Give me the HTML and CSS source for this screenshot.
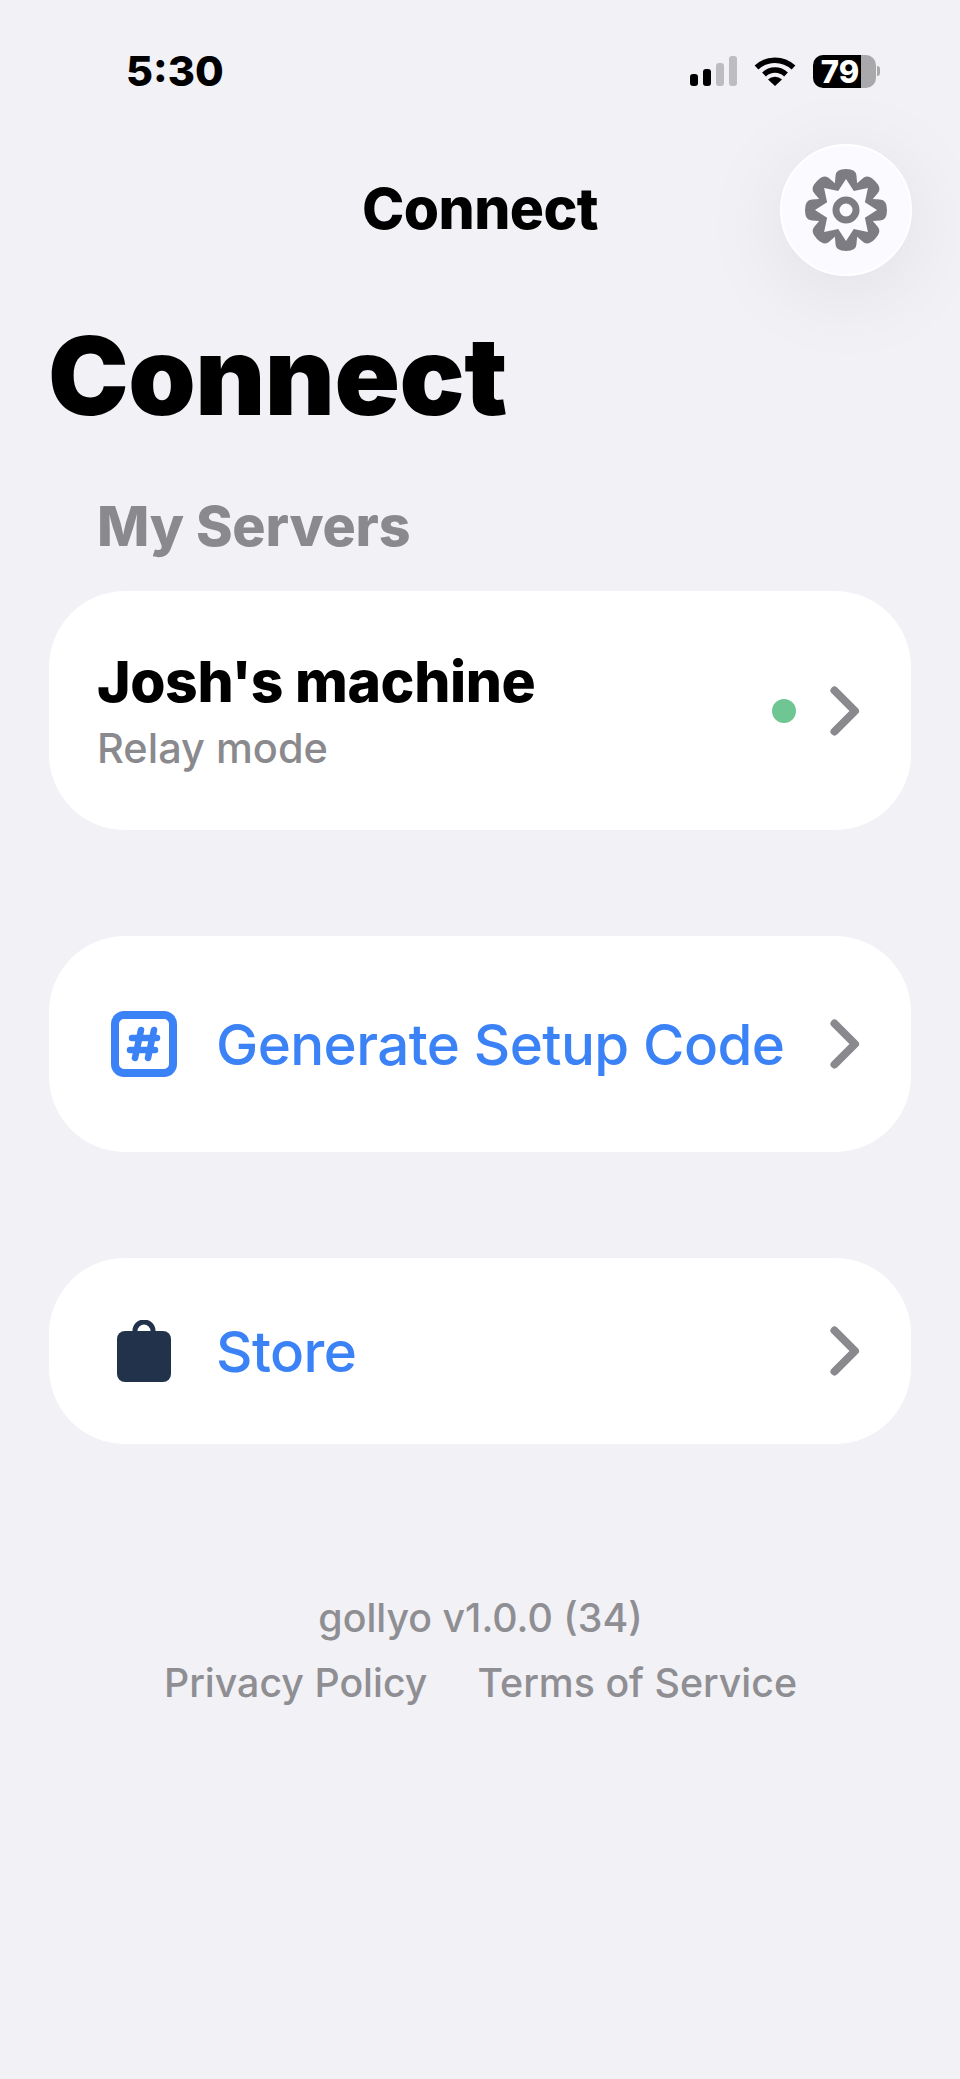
FILE: index.html
```html
<!DOCTYPE html>
<html lang="en">
<head>
  <meta charset="UTF-8">
  <meta name="viewport" content="width=device-width, initial-scale=1.0">
  <title>Connect</title>
  <link rel="stylesheet" href="styles.css">
</head>
<body>
  <!-- Status Bar -->
  <div class="status-bar">
    <span class="status-time">5:30</span>
    <div class="status-icons">
      <div class="signal">
        <span class="signal-bar bar-1"></span>
        <span class="signal-bar bar-2"></span>
        <span class="signal-bar bar-3"></span>
        <span class="signal-bar bar-4"></span>
      </div>
      <svg class="wifi" width="42" height="30" viewBox="0 0 42 30">
        <path d="M2.5 11.5a27 27 0 0 1 37 0" fill="none" stroke="#000" stroke-width="5.5"/>
        <path d="M10 18.5a16 16 0 0 1 22 0" fill="none" stroke="#000" stroke-width="5.5"/>
        <path d="M14 23.5a10 10 0 0 1 14 0L21 30z" fill="#000"/>
      </svg>
      <div class="battery">
        <div class="battery-body"><span class="battery-level">79</span></div>
        <span class="battery-tip"></span>
      </div>
    </div>
  </div>

  <!-- Nav Bar -->
  <div class="nav-bar">
    <h2 class="nav-title">Connect</h2>
    <button class="settings-button">
      <svg width="92" height="92" viewBox="-46 -46 92 92">
        <path class="gear-outline" fill-rule="evenodd" d="M26.8 -11.100L34 -10.500Q41 -10.500 41 0Q41 10.500 34 10.500L26.800 11.100L31.500 16.600Q36.400 21.600 29 29Q21.600 36.400 16.600 31.500L11.100 26.800L10.500 34Q10.500 41 0 41Q-10.500 41 -10.500 34L-11.100 26.800L-16.600 31.500Q-21.600 36.400 -29 29Q-36.400 21.600 -31.500 16.600L-26.800 11.100L-34 10.500Q-41 10.500 -41 0Q-41 -10.500 -34 -10.500L-26.800 -11.100L-31.500 -16.600Q-36.400 -21.600 -29 -29Q-21.600 -36.400 -16.600 -31.500L-11.100 -26.800L-10.500 -34Q-10.500 -41 0 -41Q10.500 -41 10.500 -34L11.100 -26.800L16.600 -31.500Q21.600 -36.400 29 -29Q36.400 -21.600 31.500 -16.600ZM31 0L18.900 7.800L21.900 21.900L7.800 18.900L0 31L-7.800 18.900L-21.900 21.900L-18.900 7.800L-31 0L-18.900 -7.800L-21.900 -21.900L-7.800 -18.900L0 -31L7.800 -18.900L21.900 -21.900L18.900 -7.800Z"/>
        <circle class="gear-hub" r="10"/>
      </svg>
    </button>
  </div>

  <div class="container">
    <h1>Connect</h1>
    <h3 class="section-title">My Servers</h3>

    <!-- Server Card -->
    <div class="card server-card">
      <div class="server-info">
        <div class="server-name">Josh's machine</div>
        <div class="server-mode">Relay mode</div>
      </div>
      <span class="status-dot"></span>
      <svg class="chevron" width="30" height="50" viewBox="0 0 30 50"><path d="M4.500 4.500L25 25L4.500 45.500"/></svg>
    </div>

    <!-- Setup Code Card -->
    <div class="card code-card">
      <svg class="card-icon" width="68" height="68" viewBox="0 0 68 68" fill="none" stroke="#3b82f6">
        <rect x="5" y="5" width="58" height="58" rx="9" stroke-width="8"/>
        <path d="M31 20L25 48M44 20L38 48M22 28H47M20 40H45" stroke-width="6.500" stroke-linecap="round"/>
      </svg>
      <span class="card-label">Generate Setup Code</span>
      <svg class="chevron" width="30" height="50" viewBox="0 0 30 50"><path d="M4.500 4.500L25 25L4.500 45.500"/></svg>
    </div>

    <!-- Store Card -->
    <div class="card store-card">
      <svg class="card-icon" width="68" height="62" viewBox="0 0 68 62">
        <path d="M25 14V11a9 9 0 0 1 18 0v3" fill="none" stroke="#22324b" stroke-width="5"/>
        <rect x="7" y="11" width="54" height="51" rx="8" fill="#22324b"/>
      </svg>
      <span class="card-label">Store</span>
      <svg class="chevron" width="30" height="50" viewBox="0 0 30 50"><path d="M4.500 4.500L25 25L4.500 45.500"/></svg>
    </div>

    <!-- Footer -->
    <div class="footer">
      <div class="version">gollyo v1.0.0 (34)</div>
      <div class="footer-links">
        <span>Privacy Policy</span>
        <span>Terms of Service</span>
      </div>
    </div>
  </div>
</body>
</html>
```

FILE: styles.css
```css
/* General Styles */
body {
  font-family: Inter, "Liberation Sans", sans-serif;
  background-color: #f1f1f6;
  margin: 0;
  color: #000000;
}

/* Status Bar */
.status-bar {
  display: flex;
  justify-content: space-between;
  align-items: center;
  height: 30px;
  padding: 56px 80px 0 126px;
}

.status-time {
  font-size: 41.500px;
  font-weight: 800;
}

.status-icons {
  display: flex;
  align-items: center;
  gap: 17px;
}

.signal {
  display: flex;
  align-items: flex-end;
  gap: 5px;
  height: 30px;
}

.signal-bar {
  width: 8px;
  border-radius: 3px;
  background-color: #000000;
}

.bar-1 { height: 12px; }
.bar-2 { height: 17px; }
.bar-3 { height: 23px; background-color: #bcbcc1; }
.bar-4 { height: 30px; background-color: #bcbcc1; }

.battery {
  display: flex;
  align-items: center;
  gap: 1px;
}

.battery-body {
  width: 63px;
  height: 33px;
  border-radius: 10px;
  background: linear-gradient(to right, #000000 48px, #a9a9ac 48px);
}

.battery-level {
  display: block;
  width: 48px;
  margin-left: 3px;
  font-size: 31px;
  line-height: 33px;
  font-weight: 800;
  text-align: center;
  color: #ffffff;
}

.battery-tip {
  width: 3px;
  height: 10px;
  border-radius: 0 3px 3px 0;
  background-color: #a9a9ac;
}

/* Nav Bar */
.nav-bar {
  display: flex;
  justify-content: flex-end;
  position: relative;
  padding: 58px 48px 0 0;
}

.nav-title {
  position: absolute;
  left: 0;
  right: 0;
  top: 57px;
  margin: 0;
  font-size: 57px;
  line-height: 132px;
  font-weight: 800;
  letter-spacing: -0.6px;
  text-align: center;
}

.settings-button {
  display: flex;
  justify-content: center;
  align-items: center;
  position: relative;
  width: 132px;
  height: 132px;
  padding: 0;
  border: 2px solid #ffffff;
  border-radius: 50%;
  background-color: #fafaff;
  box-shadow: 0 16px 90px rgba(0, 0, 0, 0.08);
}

.gear-outline {
  fill: #7c7c82;
}

.gear-hub {
  fill: none;
  stroke: #7c7c82;
  stroke-width: 7;
}

/* Content */
.container {
  padding: 0 49px;
}

h1 {
  margin: 38px 0 0 -1px;
  font-size: 108px;
  line-height: 124px;
  font-weight: 900;
  letter-spacing: -0.5px;
}

.section-title {
  margin: 56px 0 0 48px;
  font-size: 55.500px;
  line-height: 64px;
  font-weight: 800;
  letter-spacing: -0.2px;
  color: #8a8a8e;
}

/* Cards */
.card {
  display: flex;
  align-items: center;
  padding: 0 51px 0 48px;
  border-radius: 76px;
  background-color: #ffffff;
}

.server-card {
  height: 239px;
  margin-top: 33px;
}

.code-card {
  height: 216px;
  margin-top: 106px;
}

.store-card {
  height: 186px;
  margin-top: 106px;
}

.server-info {
  flex: 1;
}

.server-name {
  font-size: 57px;
  line-height: 68px;
  font-weight: 800;
  letter-spacing: -0.4px;
}

.server-mode {
  margin-top: 7px;
  font-size: 41.500px;
  line-height: 50px;
  font-weight: 500;
  color: #8a8a8e;
}

.status-dot {
  width: 24px;
  height: 24px;
  margin-right: 34px;
  border-radius: 50%;
  background-color: #6fc692;
}

.chevron {
  fill: none;
  stroke: #8a8a8e;
  stroke-width: 8;
  stroke-linecap: round;
  stroke-linejoin: round;
  flex-shrink: 0;
}

.card-icon {
  flex-shrink: 0;
  margin-left: 13px;
}

.card-label {
  flex: 1;
  margin-left: 38px;
  font-size: 56.500px;
  font-weight: 500;
  letter-spacing: -0.6px;
  color: #3b82f6;
}

/* Footer */
.footer {
  margin-top: 141px;
  padding-left: 1px;
  text-align: center;
  font-size: 39.300px;
  line-height: 65px;
  font-weight: 500;
  color: #8e8e93;
}

.footer-links {
  display: flex;
  justify-content: center;
  gap: 50px;
}
```
